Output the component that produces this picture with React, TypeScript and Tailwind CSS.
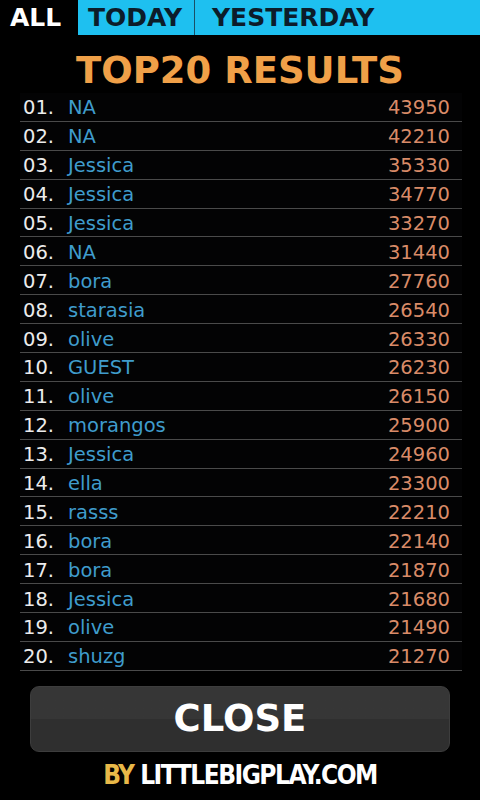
const rows: [string, number][] = [
  ['NA', 43950],
  ['NA', 42210],
  ['Jessica', 35330],
  ['Jessica', 34770],
  ['Jessica', 33270],
  ['NA', 31440],
  ['bora', 27760],
  ['starasia', 26540],
  ['olive', 26330],
  ['GUEST', 26230],
  ['olive', 26150],
  ['morangos', 25900],
  ['Jessica', 24960],
  ['ella', 23300],
  ['rasss', 22210],
  ['bora', 22140],
  ['bora', 21870],
  ['Jessica', 21680],
  ['olive', 21490],
  ['shuzg', 21270],
];

export default function App() {
  return (
    <div className="w-[480px] h-[800px] bg-black flex flex-col overflow-hidden font-['DejaVu_Sans',sans-serif]">
      {/* Tabs */}
      <div className="flex h-[35px] text-[25px] font-bold leading-none">
        <div className="w-[78px] flex items-center pl-[10px] text-white">ALL</div>
        <div className="flex-1 flex bg-[#1ec0f0] text-[#0c1c2a]">
          <div className="w-[117px] flex items-center pl-[10px] border-r border-[#1a4f66]">TODAY</div>
          <div className="flex items-center pl-[17px]">YESTERDAY</div>
        </div>
      </div>

      <h1 className="mt-[14px] h-[44px] text-center text-[37px] font-bold leading-[44px] text-[#f0a048]">
        TOP20 RESULTS
      </h1>

      {/* List */}
      <div className="mx-[20px] mr-[18px] flex flex-col">
        {rows.map(([name, score], i) => (
          <div
            key={i}
            className="h-[28.9px] pb-[3px] flex items-end border-b border-[#4a4a4a] bg-[#030304] text-[19.5px] leading-none"
          >
            <span className="w-[48px] pl-[3px] text-[#ececec]">{String(i + 1).padStart(2, '0')}.</span>
            <span className="flex-1 text-[#3f9ccc]">{name}</span>
            <span className="pr-[12px] text-[#d98b68]">{score}</span>
          </div>
        ))}
      </div>

      {/* Close */}
      <button className="mx-[30px] mt-[15px] h-[66px] rounded-[9px] border border-[#3d3d3d] bg-gradient-to-b from-[#363636] from-50% to-[#2f2f2f] to-50% text-[37px] font-bold text-white leading-none">
        CLOSE
      </button>

      <div className="mt-[10px] text-center text-[26px] font-bold leading-none tracking-[-1.5px] font-['DejaVu_Sans_Condensed','DejaVu_Sans',sans-serif]">
        <span className="text-[#e8b848]">BY</span> <span className="text-white">LITTLEBIGPLAY.COM</span>
      </div>
    </div>
  );
}
